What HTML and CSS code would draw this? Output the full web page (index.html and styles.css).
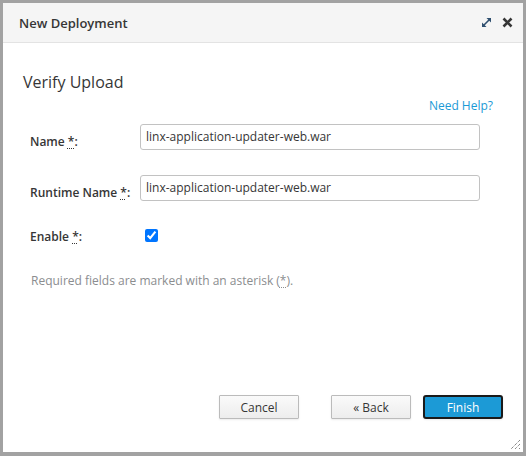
FILE: index.html
```html
<!DOCTYPE html>
<html>
<head>
<meta charset="utf-8">
<link rel="stylesheet" href="styles.css">
</head>
<body>
<div class="dialog">
  <div class="header">
    <span class="title">New Deployment</span>
    <div class="tools">
      <svg class="ico" width="11" height="11" viewBox="0 0 11 11">
        <path d="M1.5 9.5 L9.5 1.5" stroke="#2f4f6f" stroke-width="1.6"/>
        <path d="M5.5 1 H10 V5.5 Z" fill="#2f4f6f"/>
        <path d="M1 5.5 V10 H5.5 Z" fill="#2f4f6f"/>
      </svg>
      <svg class="ico" width="11" height="11" viewBox="0 0 11 11">
        <path d="M1.5 1.5 L9.5 9.5 M9.5 1.5 L1.5 9.5" stroke="#363636" stroke-width="2.6"/>
      </svg>
    </div>
  </div>
  <div class="content">
    <h2 class="heading">Verify Upload</h2>
    <div class="help-row"><a class="help" href="#">Need Help?</a></div>
    <div class="form">
      <label class="lbl">Name <abbr title="required">*</abbr>:</label>
      <div class="field"><div class="input">linx-application-updater-web.war</div></div>
      <label class="lbl lbl2">Runtime Name <abbr title="required">*</abbr>:</label>
      <div class="field f2"><div class="input">linx-application-updater-web.war</div></div>
      <label class="lbl lbl3">Enable <abbr title="required">*</abbr>:</label>
      <div class="field f3"><input class="check" type="checkbox" checked></div>
    </div>
    <p class="note">Required fields are marked with an asterisk (<abbr title="required">*</abbr>).</p>
  </div>
  <div class="footer">
    <button class="btn">Cancel</button>
    <button class="btn back">&laquo; Back</button>
    <button class="btn primary">Finish</button>
  </div>
  <svg class="grip" width="12" height="12" viewBox="0 0 12 12">
    <path d="M11 2 L2 11 M11 6 L6 11 M11 10 L10 11" stroke="#555" stroke-width="1" stroke-dasharray="1 1"/>
  </svg>
</div>
</body>
</html>
```
FILE: styles.css
```css
html, body {
  margin: 0;
  padding: 0;
  background: #a2a2a2;
  font-family: "Open Sans", "Noto Sans", sans-serif;
  color: #363636;
}
.dialog {
  position: relative;
  margin: 3px 0 0 3px;
  width: 520px;
  height: 449px;
  background: #fff;
  display: flex;
  flex-direction: column;
  box-sizing: border-box;
}
.header {
  height: 40px;
  background: #f5f5f5;
  border-bottom: 1px solid #e3e3e3;
  display: flex;
  align-items: center;
  justify-content: space-between;
  padding: 0 10px 0 16px;
  box-sizing: border-box;
  flex-shrink: 0;
}
.title {
  font-size: 13px;
  font-weight: 600;
  color: #363636;
}
.tools {
  display: flex;
  gap: 10px;
  align-items: center;
}
.ico { display: block; }
.content {
  flex: 1;
  padding: 0 20px;
}
.heading {
  margin: 25px 0 0 0;
  font-size: 16px;
  font-weight: 400;
  line-height: 28px;
  color: #363636;
}
.help-row {
  display: flex;
  justify-content: flex-end;
  margin-top: 1px;
}
.help {
  font-size: 12px;
  color: #1a9ad6;
  text-decoration: none;
  line-height: 17px;
  margin-right: 10px;
}
.form {
  margin-top: 10px;
  display: grid;
  grid-template-columns: 110px 340px;
  padding-left: 7px;
  row-gap: 25px;
}
.lbl {
  font-size: 12px;
  font-weight: 600;
  line-height: 17px;
  padding-top: 9px;
}
.lbl3 { padding-top: 2px; }
abbr {
  text-decoration: underline dotted;
  text-underline-offset: 2px;
  cursor: help;
}
.input {
  height: 26px;
  box-sizing: border-box;
  border: 1px solid #c2c2c2;
  border-radius: 3px;
  font-size: 12px;
  line-height: 24px;
  padding: 0 5px;
  color: #363636;
}
.f3 {
  padding: 3px 0 0 5px;
}
.check {
  margin: 0;
  width: 13px;
  height: 13px;
  accent-color: #0075ff;
  display: block;
}
.note {
  margin: 27px 0 0 8px;
  font-size: 12px;
  color: #8b8d8f;
  line-height: 17px;
}
.footer {
  display: flex;
  justify-content: flex-end;
  padding: 0 20px 33px 0;
  gap: 32px;
}
.btn {
  width: 80px;
  height: 24px;
  box-sizing: border-box;
  font-family: "Open Sans", "Noto Sans", sans-serif;
  font-size: 12px;
  color: #363636;
  border: 1px solid #bbb;
  border-radius: 1px;
  background: linear-gradient(#fafafa, #ededed);
  box-shadow: 0 1px 2px rgba(0,0,0,0.08);
  padding: 0;
}
.back { margin-right: -20px; }
.primary {
  background: #1c9ad6;
  color: #fff;
  border: 2px solid #1a1a1a;
  border-radius: 3px;
}
.grip {
  position: absolute;
  right: 2px;
  bottom: 2px;
}
```
